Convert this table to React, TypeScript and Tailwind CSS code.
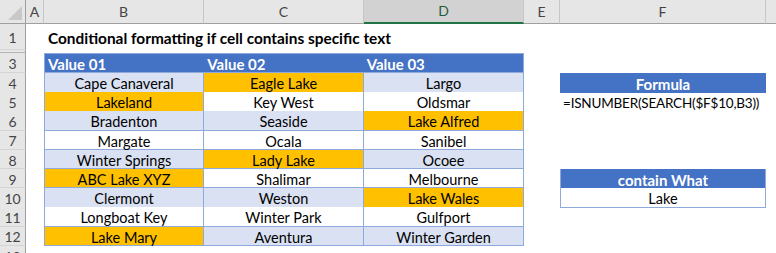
import React from "react";

const cols = "grid grid-cols-[26px_18px_160px_160px_160px_36px_206px_1fr]";
const band = "bg-[#d9e1f2]";
const hit = "bg-[#ffc000]";
const cellBorder = "border-r border-b border-[#8ea9db]";

type Cell = { t: string; hl?: boolean };

const data: Cell[][] = [
  [{ t: "Cape Canaveral" }, { t: "Eagle Lake", hl: true }, { t: "Largo" }],
  [{ t: "Lakeland", hl: true }, { t: "Key West" }, { t: "Oldsmar" }],
  [{ t: "Bradenton" }, { t: "Seaside" }, { t: "Lake Alfred", hl: true }],
  [{ t: "Margate" }, { t: "Ocala" }, { t: "Sanibel" }],
  [{ t: "Winter Springs" }, { t: "Lady Lake", hl: true }, { t: "Ocoee" }],
  [{ t: "ABC Lake XYZ", hl: true }, { t: "Shalimar" }, { t: "Melbourne" }],
  [{ t: "Clermont" }, { t: "Weston" }, { t: "Lake Wales", hl: true }],
  [{ t: "Longboat Key" }, { t: "Winter Park" }, { t: "Gulfport" }],
  [{ t: "Lake Mary", hl: true }, { t: "Aventura" }, { t: "Winter Garden" }],
];

const RowHead = ({ n }: { n: string }) => (
  <div className="flex items-center justify-center pt-[3px] bg-[#e6e6e6] border-r border-r-[#9f9f9f] border-b border-b-[#d4d4d4] text-[#444] text-[14px]">
    {n}
  </div>
);

const ColHead = ({ l, sel }: { l: string; sel?: boolean }) => (
  <div
    className={
      sel
        ? "flex items-center justify-center bg-[#d2d2d2] border-r border-[#c6c6c6] border-b-2 border-b-[#217346] text-[#1e5e3a] text-[14px]"
        : "flex items-center justify-center bg-[#e6e6e6] border-r border-[#c6c6c6] border-b border-b-[#9f9f9f] text-[#444] text-[14px]"
    }
  >
    {l}
  </div>
);

const Side = ({ row }: { row: number }) => {
  if (row === 4)
    return (
      <div className="flex items-center justify-center pt-[4px] bg-[#4472c4] text-white font-bold text-[15px]">
        Formula
      </div>
    );
  if (row === 5)
    return (
      <div className="flex items-center pt-[4px] pl-[3px] text-[13.5px] tracking-[-0.2px] whitespace-nowrap">
        =ISNUMBER(SEARCH($F$10,B3))
      </div>
    );
  if (row === 9)
    return (
      <div className="flex items-center justify-center pt-[4px] bg-[#4472c4] text-white font-bold text-[15px] border-x border-[#8ea9db]">
        contain What
      </div>
    );
  if (row === 10)
    return (
      <div className="flex items-center justify-center pt-[4px] border-x border-b border-[#8ea9db]">
        Lake
      </div>
    );
  return <div />;
};

export default function App() {
  return (
    <div
      className="w-[776px] h-[253px] overflow-hidden bg-white text-black text-[14.5px] leading-none"
      style={{ fontFamily: "Lato, 'Open Sans', sans-serif" }}
    >
      <div className={`${cols} h-[24px]`}>
        <div className="relative bg-[#e6e6e6] border-r border-[#9f9f9f] border-b border-b-[#9f9f9f]">
          <svg className="absolute right-[3px] bottom-[3px]" width="14" height="14" viewBox="0 0 14 14">
            <polygon points="14,0 14,14 0,14" fill="#c8c8c8" />
          </svg>
        </div>
        <ColHead l="A" />
        <ColHead l="B" />
        <ColHead l="C" />
        <ColHead l="D" sel />
        <ColHead l="E" />
        <ColHead l="F" />
        <div className="bg-[#e6e6e6] border-b border-[#9f9f9f]" />
      </div>

      <div className={`${cols} h-[26px]`}>
        <RowHead n="1" />
        <div />
        <div className="col-span-3 flex items-center pt-[3px] pl-[4px] font-bold text-[15.4px] whitespace-nowrap">
          Conditional formatting if cell contains specific text
        </div>
      </div>
      <div className={`${cols} h-[3px]`}>
        <div className="bg-[#e6e6e6] border-r border-[#9f9f9f] border-b border-b-[#b5b5b5]" />
      </div>

      <div className={`${cols} h-[20px]`}>
        <RowHead n="3" />
        <div />
        <div className="col-span-3 grid grid-cols-3 bg-[#4472c4] text-white font-bold text-[15px] border border-[#8ea9db]">
          <div className="flex items-center pt-[3px] pl-[3px]">Value 01</div>
          <div className="flex items-center pt-[3px] pl-[3px]">Value 02</div>
          <div className="flex items-center pt-[3px] pl-[3px]">Value 03</div>
        </div>
        <div />
        <div />
      </div>

      {data.map((r, i) => {
        const row = i + 4;
        const banded = row % 2 === 0;
        return (
          <div key={row} className={`${cols} h-[19.2px]`}>
            <RowHead n={String(row)} />
            <div />
            {r.map((c, j) => (
              <div
                key={j}
                className={`flex items-center justify-center pt-[4px] whitespace-nowrap ${cellBorder} ${
                  j === 0 ? "border-l" : ""
                } ${c.hl ? hit : banded ? band : "bg-white"}`}
              >
                {c.t}
              </div>
            ))}
            <div />
            <Side row={row} />
          </div>
        );
      })}

      <div className={`${cols} h-[20px]`}>
        <RowHead n="13" />
      </div>
    </div>
  );
}
